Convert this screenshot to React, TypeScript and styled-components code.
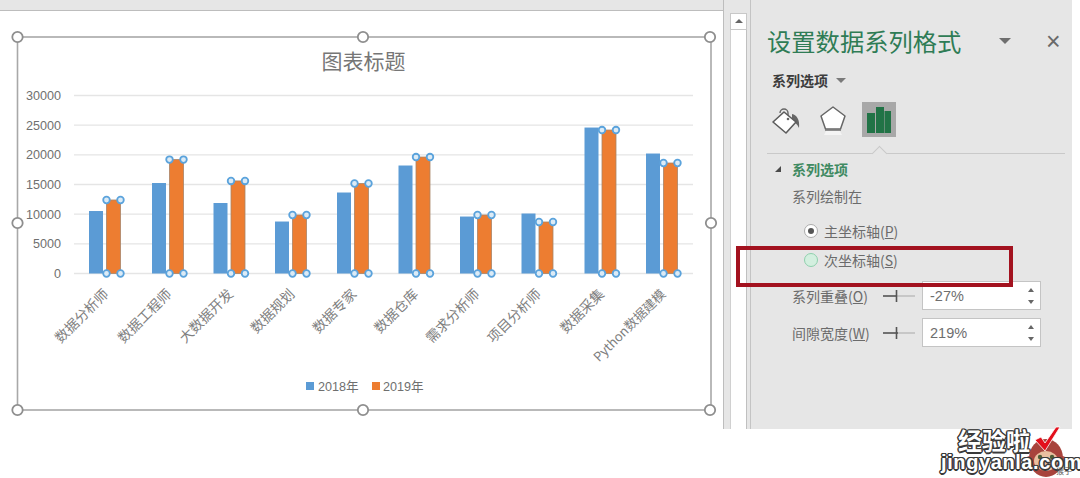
import React from "react";
import styled, { createGlobalStyle } from "styled-components";

const cjk = `"Noto Sans CJK SC", "Liberation Sans", sans-serif`;
const latin = `"Liberation Sans", "Noto Sans CJK SC", sans-serif`;

const categories = [
	"数据分析师",
	"数据工程师",
	"大数据开发",
	"数据规划",
	"数据专家",
	"数据仓库",
	"需求分析师",
	"项目分析师",
	"数据采集",
	"Python数据建模",
];
const barX = [89, 152, 213.5, 275, 337, 398.5, 460, 521.5, 584.5, 646];
const data2018 = [10530, 15250, 11880, 8760, 13650, 18200, 9600, 10110, 24600, 20220];
const data2019 = [12390, 19200, 15600, 9860, 15170, 19630, 9860, 8680, 24180, 18620];
const ticks = [0, 5000, 10000, 15000, 20000, 25000, 30000];

const BASE_Y = 273.5;
const toY = (v: number) => BASE_Y - (v / 30000) * 178;
const BAR_W = 14;

const handles = [
	[17.5, 37],
	[363, 37],
	[710, 37],
	[17.5, 223],
	[711, 223],
	[17.5, 410],
	[363, 410],
	[710, 410],
];

function Chart() {
	return (
		<ChartSvg viewBox="0 11 723 418">
			<rect x="17.5" y="37" width="693.5" height="373" fill="#fff" stroke="#a8a8a8" strokeWidth="1.6" />
			<text x="363.5" y="69" textAnchor="middle" fontSize="21" fill="#767676" fontFamily={cjk}>
				图表标题
			</text>
			{ticks.map((t) => (
				<g key={t}>
					<line x1="74" x2="693" y1={toY(t)} y2={toY(t)} stroke="#e5e5e5" strokeWidth="1.4" />
					<text x="61" y={toY(t) + 4.5} textAnchor="end" fontSize="12.6" fill="#6f6f6f" fontFamily={latin}>
						{t}
					</text>
				</g>
			))}
			{barX.map((x, i) => {
				const orangeX = x + 17.5;
				const blueTop = toY(data2018[i]);
				const orangeTop = toY(data2019[i]);
				return (
					<g key={categories[i]}>
						<rect x={x} y={blueTop} width={BAR_W} height={BASE_Y - blueTop} fill="#5b9bd5" />
						<rect x={orangeX} y={orangeTop} width={BAR_W} height={BASE_Y - orangeTop} fill="#ed7d31" stroke="#a98468" strokeWidth="0.8" />
						{[
							[orangeX, orangeTop],
							[orangeX + BAR_W, orangeTop],
							[orangeX, BASE_Y],
							[orangeX + BAR_W, BASE_Y],
						].map(([cx, cy]) => (
							<circle key={`${cx}-${cy}`} cx={cx} cy={cy} r="3.3" fill="#dcebf6" stroke="#5ba3dc" strokeWidth="1.8" />
						))}
						<text
							transform={`translate(${x + 20.5} 295) rotate(-45)`}
							textAnchor="end"
							fontSize={categories[i].startsWith("Python") ? 13 : 13.8}
							fill="#808080"
							fontFamily={cjk}
						>
							{categories[i]}
						</text>
					</g>
				);
			})}
			<rect x="306" y="382" width="8" height="8" fill="#5b9bd5" />
			<text x="318" y="391" fontSize="12.6" fill="#6f6f6f" fontFamily={latin}>
				2018年
			</text>
			<rect x="372" y="382" width="8" height="8" fill="#ed7d31" />
			<text x="383" y="391" fontSize="12.6" fill="#6f6f6f" fontFamily={latin}>
				2019年
			</text>
			{handles.map(([cx, cy]) => (
				<circle key={`${cx}-${cy}`} cx={cx} cy={cy} r="5.2" fill="#fff" stroke="#8e8e8e" strokeWidth="1.8" />
			))}
		</ChartSvg>
	);
}

function BucketIcon() {
	return (
		<svg width="30" height="30" viewBox="0 0 30 30">
			<path d="M21 9c5 1 8 6 7 14-2-4-4-6-7-7z" fill="#666" />
			<path d="M9 8a4 4 0 0 1 8 0v6" fill="none" stroke="#666" strokeWidth="1.4" />
			<path d="M13 7L25 17 15 28 2 17z" fill="#fff" stroke="#5c5c5c" strokeWidth="1.6" strokeLinejoin="round" />
			<circle cx="17" cy="14" r="1.3" fill="#666" />
		</svg>
	);
}

function PentagonIcon() {
	return (
		<svg width="28" height="30" viewBox="0 0 28 30">
			<path d="M14 2l12 9-4.5 13h-15L2 11z" fill="#fff" stroke="#666" strokeWidth="1.5" strokeLinejoin="round" />
			<path d="M6 25h16" stroke="#777" strokeWidth="1.6" />
			<path d="M5 30l2-4h14l2 4z" fill="#f4f4f4" />
		</svg>
	);
}

function ColumnsIcon() {
	return (
		<svg width="26" height="26" viewBox="0 0 26 26">
			<path d="M1 6h8v20H1zM10 0h8v26h-8zM18.500 4H25v22h-6.500z" fill="#217346" />
		</svg>
	);
}

function Slider({ fill }: { fill: number }) {
	return (
		<svg width="34" height="14" viewBox="0 0 34 14">
			<line x1="1" x2="33" y1="7" y2="7" stroke="#a8a8a8" strokeWidth="1" />
			<line x1="1" x2={fill} y1="7" y2="7" stroke="#555" strokeWidth="1.5" />
			<line x1="14.500" x2="14.500" y1="1" y2="13" stroke="#555" strokeWidth="1.6" />
		</svg>
	);
}

function Watermark() {
	return (
		<WatermarkBox>
			<BrandCn>经验啦</BrandCn>
			<MonkeySvg viewBox="0 0 44 52" width="44" height="52">
				<circle cx="4" cy="34" r="4" fill="#b9534a" />
				<circle cx="36" cy="34" r="4" fill="#b9534a" />
				<ellipse cx="20" cy="32" rx="17" ry="19" fill="#a8433c" />
				<ellipse cx="20" cy="35" rx="12" ry="10" fill="#e9bfa0" />
				<circle cx="14" cy="31" r="2.2" fill="#4d5d36" />
				<circle cx="26" cy="31" r="2.2" fill="#4d5d36" />
				<path d="M9 14l6-3 4 6L30 1h4L19 25z" fill="#e3101c" stroke="#fff" strokeWidth="0.8" />
			</MonkeySvg>
			<BrandEn>jingyanla.com</BrandEn>
			<BrandTag>猴子</BrandTag>
		</WatermarkBox>
	);
}

export default function App() {
	return (
		<>
			<GlobalStyle />
			<Page>
				<Workspace>
					<Sheet>
						<SheetTopBar />
						<Chart />
					</Sheet>
					<Gutter>
						<ScrollTrack>
							<ScrollButton />
						</ScrollTrack>
					</Gutter>
					<Panel>
						<TitleRow>
							<PanelTitle>设置数据系列格式</PanelTitle>
							<Caret $size={6} $color="#6e6e6e" />
							<CloseMark>×</CloseMark>
						</TitleRow>
						<DropdownRow>
							<DropdownLabel>系列选项</DropdownLabel>
							<Caret $size={5.5} $color="#7a7a7a" />
						</DropdownRow>
						<IconTabs>
							<IconTab>
								<BucketIcon />
							</IconTab>
							<IconTab>
								<PentagonIcon />
							</IconTab>
							<IconTab $active>
								<ColumnsIcon />
							</IconTab>
						</IconTabs>
						<Divider />
						<SectionHeader>
							<SectionArrow />
							<SectionTitle>系列选项</SectionTitle>
						</SectionHeader>
						<Body>
							<FieldLabel>系列绘制在</FieldLabel>
							<RadioList>
								<RadioRow>
									<Radio $checked />
									<FieldLabel>
										主坐标轴(<u>P</u>)
									</FieldLabel>
								</RadioRow>
								<RadioRow>
									<Radio $hover />
									<FieldLabel>
										次坐标轴(<u>S</u>)
									</FieldLabel>
								</RadioRow>
							</RadioList>
							<SpinList>
								<SpinRow>
									<SpinLabel>
										系列重叠(<u>O</u>)
									</SpinLabel>
									<Slider fill={14} />
									<SpinBox>
										<SpinValue>-27%</SpinValue>
										<SpinArrows>
											<SpinUp />
											<SpinDown />
										</SpinArrows>
									</SpinBox>
								</SpinRow>
								<SpinRow>
									<SpinLabel>
										间隙宽度(<u>W</u>)
									</SpinLabel>
									<Slider fill={16} />
									<SpinBox>
										<SpinValue>219%</SpinValue>
										<SpinArrows>
											<SpinUp />
											<SpinDown />
										</SpinArrows>
									</SpinBox>
								</SpinRow>
							</SpinList>
						</Body>
					</Panel>
				</Workspace>
				<Highlight />
				<Watermark />
			</Page>
		</>
	);
}

const outline = (c: string) =>
	`1.5px 0 0 ${c}, -1.5px 0 0 ${c}, 0 1.5px 0 ${c}, 0 -1.5px 0 ${c}, 1px 1px 0 ${c}, -1px 1px 0 ${c}, 1px -1px 0 ${c}, -1px -1px 0 ${c}`;

const GlobalStyle = createGlobalStyle`
	html, body {
		margin: 0;
		padding: 0;
		background: #fff;
	}
	* {
		box-sizing: border-box;
	}
`;

const Page = styled.div`
	position: relative;
	width: 1080px;
	height: 478px;
	overflow: hidden;
	background: #fff;
	font-family: ${cjk};
`;

const Workspace = styled.div`
	display: flex;
	width: 1072px;
	height: 429px;
`;

const Sheet = styled.div`
	display: flex;
	flex-direction: column;
	width: 724px;
	background: #fff;
	border-right: 1px solid #bdbdbd;
`;

const SheetTopBar = styled.div`
	height: 11px;
	flex: none;
	background: #e6e6e6;
	border-bottom: 1.5px solid #bdbdbd;
`;

const ChartSvg = styled.svg`
	display: block;
	width: 723px;
	height: 418px;
`;

const Gutter = styled.div`
	flex: none;
	display: flex;
	width: 27px;
	padding: 13px 0 0 6px;
	background: #e6e6e6;
	border-right: 1.5px solid #c4c4c4;
`;

const ScrollTrack = styled.div`
	width: 17px;
	background: #fff;
	border-left: 1px solid #d0d0d0;
	border-right: 1px solid #c0c0c0;
`;

const ScrollButton = styled.div`
	position: relative;
	height: 17px;
	border: 1px solid #c8c8c8;
	margin: 0 -1px;
	background: #fff;

	&::after {
		content: "";
		position: absolute;
		left: 4px;
		top: 5px;
		border-left: 4px solid transparent;
		border-right: 4px solid transparent;
		border-bottom: 4px solid #666;
	}
`;

const Panel = styled.div`
	flex: 1;
	display: flex;
	flex-direction: column;
	padding: 26px 7px 0 16px;
	background: #e6e6e6;
`;

const TitleRow = styled.div`
	display: flex;
	align-items: center;
	height: 30px;
`;

const PanelTitle = styled.div`
	width: 232px;
	font-size: 24.3px;
	line-height: 30px;
	color: #2f7c55;
`;

const Caret = styled.span<{ $size: number; $color: string }>`
	display: inline-block;
	width: 0;
	height: 0;
	border-left: ${(p) => p.$size}px solid transparent;
	border-right: ${(p) => p.$size}px solid transparent;
	border-top: ${(p) => p.$size}px solid ${(p) => p.$color};
`;

const CloseMark = styled.span`
	margin-left: 35px;
	font-family: ${latin};
	font-size: 25px;
	line-height: 30px;
	color: #6a6a6a;
`;

const DropdownRow = styled.div`
	display: flex;
	align-items: center;
	gap: 8px;
	height: 20px;
	margin: 14px 0 0 5px;
`;

const DropdownLabel = styled.span`
	font-size: 14px;
	font-weight: 700;
	color: #3c3c3c;
`;

const IconTabs = styled.div`
	display: flex;
	align-items: center;
	height: 35px;
	margin: 12px 0 0 4px;
`;

const IconTab = styled.div<{ $active?: boolean }>`
	display: flex;
	align-items: center;
	justify-content: center;
	width: ${(p) => (p.$active ? "34px" : "30px")};
	height: 35px;
	margin-right: ${(p) => (p.$active ? "0" : "17px")};
	background: ${(p) => (p.$active ? "#a8a8a8" : "transparent")};

	&:nth-child(2) {
		margin-right: 14px;
	}
`;

const Divider = styled.div`
	position: relative;
	height: 1px;
	margin-top: 16px;
	background: #c9c9c9;

	&::after {
		content: "";
		position: absolute;
		left: 107px;
		top: -5px;
		width: 10px;
		height: 10px;
		transform: rotate(45deg);
		background: #e6e6e6;
		border-left: 1px solid #c9c9c9;
		border-top: 1px solid #c9c9c9;
	}
`;

const SectionHeader = styled.div`
	display: flex;
	align-items: center;
	height: 20px;
	margin: 5px 0 0 8px;
`;

const SectionArrow = styled.span`
	width: 0;
	height: 0;
	margin-right: 11px;
	border-left: 6px solid transparent;
	border-bottom: 6px solid #4a4a4a;
`;

const SectionTitle = styled.span`
	font-size: 14px;
	font-weight: 700;
	color: #3f8a62;
`;

const Body = styled.div`
	display: flex;
	flex-direction: column;
	margin-top: 7px;
	padding-left: 25px;
`;

const FieldLabel = styled.span`
	display: block;
	font-size: 14px;
	line-height: 20px;
	color: #6b6b6b;
	white-space: nowrap;

	u {
		text-underline-offset: 1px;
	}
`;

const RadioList = styled.div`
	display: flex;
	flex-direction: column;
	gap: 9px;
	margin: 6px 0 0 -8px;
	padding-top: 9px;
`;

const RadioRow = styled.div`
	display: flex;
	align-items: center;
	gap: 6px;
	height: 20px;
	padding-left: 20px;
`;

const Radio = styled.span<{ $checked?: boolean; $hover?: boolean }>`
	display: inline-flex;
	align-items: center;
	justify-content: center;
	width: 14px;
	height: 14px;
	border-radius: 50%;
	border: 1px solid ${(p) => (p.$hover ? "#8fd0ad" : "#ababab")};
	background: ${(p) => (p.$hover ? "#d3efdf" : "#fff")};

	&::after {
		content: "";
		display: ${(p) => (p.$checked ? "block" : "none")};
		width: 6px;
		height: 6px;
		border-radius: 50%;
		background: #555;
	}
`;

const SpinList = styled.div`
	display: flex;
	flex-direction: column;
	gap: 8px;
	margin-top: 11px;
`;

const SpinRow = styled.div`
	display: flex;
	align-items: center;
	height: 29px;
`;

const SpinLabel = styled(FieldLabel)`
	width: 90px;
`;

const SpinBox = styled.div`
	display: flex;
	align-items: center;
	justify-content: space-between;
	width: 119px;
	height: 29px;
	margin-left: 6px;
	padding: 0 6px 0 7px;
	background: #fff;
	border: 1.5px solid #c4c4c4;
`;

const SpinValue = styled.span`
	font-family: ${latin};
	font-size: 14.5px;
	color: #6e6e6e;
`;

const SpinArrows = styled.div`
	display: flex;
	flex-direction: column;
	gap: 8px;
`;

const SpinUp = styled.span`
	width: 0;
	height: 0;
	border-left: 3.5px solid transparent;
	border-right: 3.5px solid transparent;
	border-bottom: 4px solid #666;
`;

const SpinDown = styled.span`
	width: 0;
	height: 0;
	border-left: 3.5px solid transparent;
	border-right: 3.5px solid transparent;
	border-top: 4px solid #666;
`;

const Highlight = styled.div`
	position: absolute;
	left: 736px;
	top: 246px;
	width: 277px;
	height: 41px;
	border: 4px solid #a3121f;
`;

const WatermarkBox = styled.div`
	position: absolute;
	left: 938px;
	top: 426px;
	width: 142px;
	height: 52px;
`;

const MonkeySvg = styled.svg`
	position: absolute;
	left: 88px;
	top: 0;
`;

const BrandCn = styled.div`
	position: absolute;
	left: 20px;
	top: 3px;
	font-size: 24px;
	line-height: 22px;
	font-weight: 700;
	color: #fff;
	text-shadow: ${outline("#3a3a3a")};
`;

const BrandEn = styled.div`
	position: absolute;
	left: 3px;
	top: 25px;
	font-family: ${latin};
	font-size: 20px;
	line-height: 23px;
	font-weight: 700;
	letter-spacing: 0.6px;
	color: #fff;
	text-shadow: ${outline("#3a3a3a")};
`;

const BrandTag = styled.div`
	position: absolute;
	left: 118px;
	top: 41px;
	font-size: 8px;
	line-height: 8px;
	color: #555;
`;
